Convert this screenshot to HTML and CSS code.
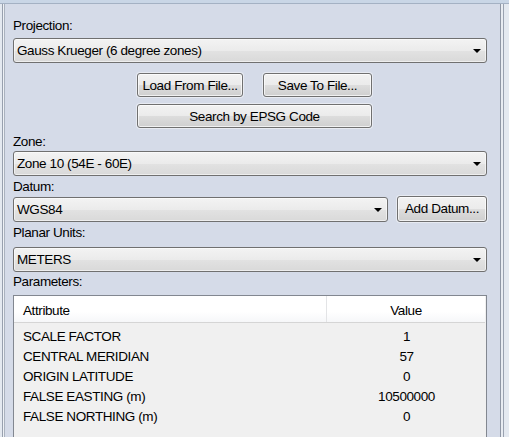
FILE: index.html
```html
<!DOCTYPE html>
<html>
<head>
<meta charset="utf-8">
<link rel="stylesheet" href="styles.css">
</head>
<body>
<div class="window">
  <div class="topbar"></div>
  <div class="frame">
    <div class="edge-left"></div>
    <div class="panel">
      <div class="label lbl-projection">Projection:</div>
      <div class="combo combo-projection">
        <span class="combo-text">Gauss Krueger (6 degree zones)</span>
        <span class="arrow"></span>
      </div>
      <div class="btn-group">
        <div class="btn-row">
          <div class="btn btn-load">Load From File...</div>
          <div class="btn btn-save">Save To File...</div>
        </div>
        <div class="btn btn-search">Search by EPSG Code</div>
      </div>
      <div class="label lbl-zone">Zone:</div>
      <div class="combo combo-zone">
        <span class="combo-text">Zone 10 (54E - 60E)</span>
        <span class="arrow"></span>
      </div>
      <div class="label lbl-datum">Datum:</div>
      <div class="datum-row">
        <div class="combo combo-datum">
          <span class="combo-text">WGS84</span>
          <span class="arrow"></span>
        </div>
        <div class="btn btn-add">Add Datum...</div>
      </div>
      <div class="label lbl-units">Planar Units:</div>
      <div class="combo combo-units">
        <span class="combo-text">METERS</span>
        <span class="arrow"></span>
      </div>
      <div class="label lbl-params">Parameters:</div>
      <div class="grid">
        <div class="grid-head">
          <div class="head-cell head-attr">Attribute</div>
          <div class="head-cell head-value">Value</div>
        </div>
        <div class="grid-body">
          <div class="grid-row"><div class="cell-attr">SCALE FACTOR</div><div class="cell-value">1</div></div>
          <div class="grid-row"><div class="cell-attr">CENTRAL MERIDIAN</div><div class="cell-value">57</div></div>
          <div class="grid-row"><div class="cell-attr">ORIGIN LATITUDE</div><div class="cell-value">0</div></div>
          <div class="grid-row"><div class="cell-attr">FALSE EASTING (m)</div><div class="cell-value">10500000</div></div>
          <div class="grid-row"><div class="cell-attr">FALSE NORTHING (m)</div><div class="cell-value">0</div></div>
        </div>
      </div>
    </div>
    <div class="edge-right"></div>
  </div>
</div>
</body>
</html>
```

FILE: styles.css
```css
* { box-sizing: border-box; }

html, body {
  margin: 0;
  padding: 0;
  width: 509px;
  height: 437px;
  overflow: hidden;
  background: #e4e9f0;
}

body {
  font-family: "Liberation Sans", Arial, sans-serif;
  font-size: 13.5px;
  letter-spacing: -0.4px;
  color: #000;
}

.window {
  display: flex;
  flex-direction: column;
  width: 509px;
  height: 437px;
}

.topbar {
  height: 4px;
  flex: none;
  background: linear-gradient(to bottom, #c9d6e6 0 3px, #a4b1c3 3px 4px);
}

.frame {
  flex: 1;
  display: flex;
  min-height: 0;
}

.edge-left {
  width: 5px;
  flex: none;
  background: linear-gradient(to right, #e4e9f0 0 2px, #98a0ae 2px 3px, #eef1f5 3px 4px, #aab2be 4px 5px);
}

.edge-right {
  width: 9px;
  flex: none;
  background: linear-gradient(to right, #8f97a5 0 1px, #e8ecf2 1px 3px, #9aa2b0 3px 4px, #e4e9f0 4px 9px);
}

.panel {
  flex: 1;
  background: #d5dbe8;
  padding: 14px 13px 0 8px;
  display: flex;
  flex-direction: column;
  overflow: hidden;
}

.label {
  height: 15px;
  line-height: 15px;
  white-space: nowrap;
}

.lbl-zone { margin-top: 6px; }
.lbl-datum { margin-top: 3px; }
.lbl-units { margin-top: 3px; }
.lbl-params { margin-top: 2px; }

.combo {
  position: relative;
  height: 25px;
  border: 1px solid #707070;
  border-radius: 3px;
  background: linear-gradient(to bottom, #f3f3f3 0%, #ebebeb 50%, #e2e2e2 51%, #d9d9d9 100%);
  box-shadow: inset 0 0 0 1px rgba(255, 255, 255, 0.55);
  display: flex;
  align-items: center;
  padding-left: 3px;
  flex: none;
}

.combo-projection { margin-top: 5px; }
.combo-zone { margin-top: 2px; }
.combo-units { margin-top: 7px; }

.combo-text {
  white-space: nowrap;
}

.arrow {
  position: absolute;
  right: 5px;
  top: 10px;
  width: 0;
  height: 0;
  border-left: 4px solid transparent;
  border-right: 4px solid transparent;
  border-top: 4px solid #000;
}

.btn-group {
  margin-top: 10px;
  margin-left: 124px;
  width: 235px;
  display: flex;
  flex-direction: column;
  gap: 7px;
}

.btn-row {
  display: flex;
  justify-content: space-between;
}

.btn {
  height: 24px;
  border: 1px solid #707070;
  border-radius: 3px;
  background: linear-gradient(to bottom, #f2f2f2 0%, #ebebeb 50%, #dddddd 51%, #cfcfcf 100%);
  box-shadow: inset 0 0 0 1px rgba(255, 255, 255, 0.7), 0 0 0 1px rgba(255, 255, 255, 0.45);
  display: flex;
  align-items: center;
  justify-content: center;
  white-space: nowrap;
}

.btn-load { width: 106px; }
.btn-save { width: 109px; }
.btn-search { width: 235px; }

.datum-row {
  margin-top: 3px;
  display: flex;
  align-items: center;
  justify-content: space-between;
}

.combo-datum { width: 375px; }

.btn-add {
  width: 90px;
  height: 26px;
  margin-top: -2px;
}

.grid {
  margin-top: 6px;
  border: 1px solid #828790;
  background: #f0f0f0;
  height: 200px;
  flex: none;
}

.grid-head {
  display: flex;
  height: 27px;
  background: linear-gradient(to bottom, #ffffff 0%, #ffffff 60%, #f6f7f9 100%);
  border-bottom: 1px solid #d5d5d5;
  margin-right: 1px;
}

.head-cell {
  display: flex;
  align-items: center;
  padding-top: 3px;
  white-space: nowrap;
}

.head-attr {
  width: 313px;
  padding-left: 9px;
  border-right: 1px solid #e3e4e6;
}

.head-value {
  flex: 1;
  justify-content: center;
}

.grid-body {
  padding-top: 3px;
}

.grid-row {
  display: flex;
  height: 20px;
  align-items: center;
  white-space: nowrap;
}

.cell-attr {
  width: 313px;
  padding-left: 9px;
}

.cell-value {
  flex: 1;
  text-align: center;
}
```
